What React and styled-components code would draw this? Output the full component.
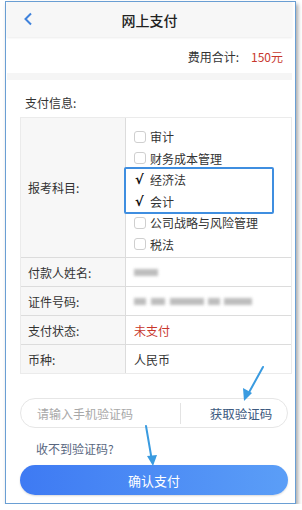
import styled, { createGlobalStyle } from "styled-components";

const Global = createGlobalStyle`
  html, body {
    margin: 0;
    padding: 0;
    background: #ffffff;
  }
  body {
    font-family: "Noto Sans CJK SC", "Noto Sans", sans-serif;
    color: #333;
  }
`;

const Frame = styled.div`
  position: relative;
  box-sizing: border-box;
  width: 291px;
  height: 503px;
  margin: 1px 0 0 5px;
  border: 1px solid #6a9fd4;
  box-shadow: 2px 3px 4px rgba(0, 0, 0, 0.35);
  background: #fff;
  padding: 0 3px 0 1px;
  display: flex;
  flex-direction: column;
`;

const Header = styled.div`
  height: 35px;
  background: #f7f7f7;
  box-shadow: 0 1px 2px rgba(0, 0, 0, 0.08);
  display: flex;
  align-items: center;
  justify-content: center;
  position: relative;
  font-size: 14px;
  font-weight: 500;
  color: #222;
`;

const Back = styled.div`
  position: absolute;
  left: 16px;
  top: 10px;
  display: flex;
`;

const FeeRow = styled.div`
  height: 34px;
  margin-top: 2px;
  display: flex;
  align-items: center;
  justify-content: flex-end;
  padding-right: 9px;
  font-size: 12px;
  gap: 12px;
`;

const Red = styled.span`
  color: #c8372d;
`;

const Band = styled.div`
  height: 7px;
  background: #f5f5f5;
`;

const InfoTitle = styled.div`
  height: 37px;
  display: flex;
  align-items: center;
  padding-left: 18px;
  padding-top: 7px;
  box-sizing: border-box;
  font-size: 12px;
  color: #333;
`;

const Table = styled.div`
  margin-left: 13px;
  border: 1px solid #ebebeb;
  display: grid;
  grid-template-columns: 105px 1fr;
  font-size: 12px;
`;

const Label = styled.div`
  background: #f7f7f7;
  display: flex;
  align-items: center;
  padding-left: 7px;
  height: ${({ $h }) => $h || 29}px;
  border-right: 1px solid #dcdcdc;
  border-top: ${({ $first }) => ($first ? "none" : "1px solid #dcdcdc")};
  box-sizing: border-box;
`;

const Value = styled.div`
  display: flex;
  align-items: center;
  padding-left: 8px;
  border-top: ${({ $first }) => ($first ? "none" : "1px solid #dcdcdc")};
  box-sizing: border-box;
  color: ${({ $red }) => ($red ? "#c8372d" : "#333")};
`;

const List = styled.div`
  padding-top: 6px;
  display: flex;
  flex-direction: column;
`;

const Item = styled.div`
  height: 21.5px;
  display: flex;
  align-items: center;
  gap: 4px;
`;

const Box = styled.span`
  width: 10px;
  height: 10px;
  border: 1px solid #cfcfcf;
  border-radius: 3px;
  background: #fff;
`;

const Picked = styled.div`
  margin: -2px 0 -2px -10px;
  width: 150px;
  border: 2px solid #3f8ee0;
  border-radius: 2px;
  padding-left: 9px;
  box-sizing: border-box;
  background: #fff;
  position: relative;
`;

const Tick = styled.span`
  width: 11px;
  font-size: 13px;
  font-weight: 700;
  color: #111;
  font-family: "DejaVu Sans", sans-serif;
`;

const Blur = styled.span`
  display: inline-block;
  width: ${({ $w }) => $w}px;
  height: 7px;
  margin-right: ${({ $gap }) => $gap || 0}px;
  background: #a8a8a8;
  filter: blur(1.8px);
  opacity: 0.75;
`;

const CodeBox = styled.div`
  margin: 24px 4px 0 13px;
  height: 30px;
  border: 1px solid #e6e6e6;
  border-radius: 15px;
  display: flex;
  align-items: center;
  font-size: 12px;
  box-sizing: border-box;
`;

const Placeholder = styled.div`
  flex: 1;
  padding-left: 16px;
  color: #a8a8a8;
`;

const Divider = styled.div`
  width: 1px;
  height: 21px;
  background: #e3e3e3;
`;

const GetCode = styled.div`
  width: 106px;
  padding-left: 14px;
  box-sizing: border-box;
  text-align: center;
  color: #3d5a80;
  font-size: 12.5px;
`;

const Help = styled.div`
  margin: 12px 0 0 29px;
  font-size: 12px;
  color: #596780;
`;

const Confirm = styled.button`
  margin: 8px 4px 0 13px;
  height: 30px;
  border: none;
  border-radius: 15px;
  background: linear-gradient(90deg, #3e7af3, #5b9ef7);
  color: #fff;
  font-family: inherit;
  font-size: 13px;
  box-shadow: 0 1px 2px rgba(0, 0, 0, 0.15);
`;

const Arrows = styled.svg`
  position: absolute;
  left: -6px;
  top: -1px;
  pointer-events: none;
`;

const subjects = [
  { name: "审计" },
  { name: "财务成本管理" },
  { name: "经济法", picked: true },
  { name: "会计", picked: true },
  { name: "公司战略与风险管理" },
  { name: "税法" },
];

export default function App() {
  const before = subjects.slice(0, 2);
  const picked = subjects.filter((s) => s.picked);
  const after = subjects.slice(4);

  return (
    <>
      <Global />
      <Frame>
        <Header>
          <Back>
            <svg width="10" height="14" viewBox="0 0 10 14">
              <path d="M8 1.5 L2.5 7 L8 12.5" fill="none" stroke="#3f82dc" strokeWidth="2" />
            </svg>
          </Back>
          网上支付
        </Header>
        <FeeRow>
          <span>费用合计:</span>
          <Red>150元</Red>
        </FeeRow>
        <Band />
        <InfoTitle>支付信息:</InfoTitle>
        <Table>
          <Label $first $h={139}>报考科目:</Label>
          <Value $first>
            <List>
              {before.map((s) => (
                <Item key={s.name}><Box />{s.name}</Item>
              ))}
              <Picked>
                {picked.map((s) => (
                  <Item key={s.name}><Tick>√</Tick>{s.name}</Item>
                ))}
              </Picked>
              {after.map((s) => (
                <Item key={s.name}><Box />{s.name}</Item>
              ))}
            </List>
          </Value>
          <Label>付款人姓名:</Label>
          <Value><Blur $w={24} /></Value>
          <Label>证件号码:</Label>
          <Value>
            <Blur $w={12} $gap={5} />
            <Blur $w={14} $gap={5} />
            <Blur $w={34} $gap={4} />
            <Blur $w={12} $gap={4} />
            <Blur $w={28} />
          </Value>
          <Label>支付状态:</Label>
          <Value $red>未支付</Value>
          <Label>币种:</Label>
          <Value>人民币</Value>
        </Table>
        <CodeBox>
          <Placeholder>请输入手机验证码</Placeholder>
          <Divider />
          <GetCode>获取验证码</GetCode>
        </CodeBox>
        <Help>收不到验证码?</Help>
        <Confirm>确认支付</Confirm>
        <Arrows width="302" height="510" viewBox="0 0 302 510">
          <g stroke="#3a9be0" strokeWidth="2" fill="none" strokeLinecap="round">
            <path d="M263 366 L247 395" />
            <path d="M146 425 L152 460" />
          </g>
          <g fill="#3a9be0">
            <path d="M244 400 L243 387 L252 392 Z" />
            <path d="M153 465 L147 455 L157 454 Z" />
          </g>
        </Arrows>
      </Frame>
    </>
  );
}
